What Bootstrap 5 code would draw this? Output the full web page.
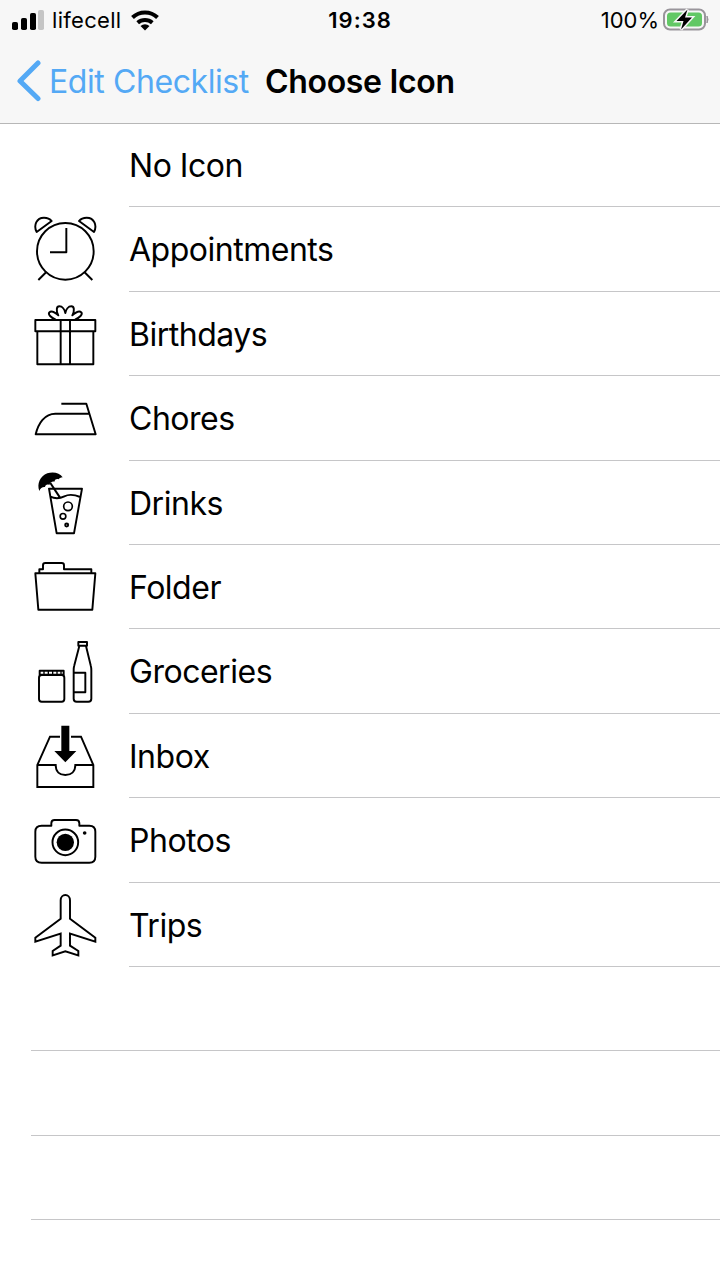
<!DOCTYPE html>
<html lang="en">
<head>
<meta charset="utf-8">
<meta name="viewport" content="width=device-width, initial-scale=1">
<title>Choose Icon</title>
<link href="https://cdn.jsdelivr.net/npm/bootstrap@5.3.0/dist/css/bootstrap.min.css" rel="stylesheet">
<style>
body { font-family: Inter, "Liberation Sans", sans-serif; color: #000; background: #fff; overflow: hidden; }
.top-area { height: 124px; background: #f7f7f7; border-bottom: 1px solid #b7b7b7; }
.status { height: 40px; font-size: 22px; line-height: 40px; }
.status > * { flex: 1 1 0; }
.bars { margin-left: 12px; }
.carrier { letter-spacing: .3px; margin-left: 8px; }
.wifi { margin-left: 9px; }
.clock { font-weight: 600; letter-spacing: 1px; }
.battery { margin: 0 11px 0 4px; }
.title-bar { height: 83px; font-size: 32px; line-height: 83px; white-space: nowrap; }
.back { color: #54a9f5; text-decoration: none; width: 249px; letter-spacing: -.42px; }
.back svg { flex: none; margin: -1px 7px 0 16px; }
.screen-title { font-size: 32px; font-weight: 600; line-height: 83px; margin-left: 16px; letter-spacing: -.32px; }
.entry { height: 84.42px; padding-left: 32px; }
.entry svg { width: 66px; height: 84px; flex: none; fill: none; stroke: #000; stroke-width: 5.8; stroke-linejoin: round; }
.entry .solid { fill: #000; }
.entry .label { margin-left: 31px; font-size: 32px; letter-spacing: -.48px; border-bottom: 1px solid #c6c6c8; height: 100%; line-height: 86px; }
.entry.first { height: 83.4px; }
.entry.first .label { line-height: 84px; }
.blank { height: 84.42px; margin-left: 31px; border-bottom: 1px solid #c6c6c8; }
</style>
</head>
<body>
<header class="top-area">
  <div class="status d-flex align-items-center">
    <div class="d-flex align-items-center">
      <svg class="bars" width="32" height="22" viewBox="0 0 32 22"><rect y="13" width="6" height="8" rx="1.8"/><rect x="9" y="9" width="6" height="12" rx="1.8"/><rect x="18" y="4" width="6" height="17" rx="1.8"/><rect x="26" y="1" width="6" height="20" rx="1.8" fill="#c5c5c5"/></svg>
      <span class="carrier">lifecell</span>
      <svg class="wifi" width="31" height="22" viewBox="0 0 30 22"><g fill="none" stroke="#000" stroke-width="4"><path d="M2 8.500a18 18 0 0 1 25 0"/><path d="M7.2 13.700a11 11 0 0 1 14.600 0"/></g><path d="M14.500 21.500l-4.500-4.500a7 7 0 0 1 9 0z"/></svg>
    </div>
    <div class="clock text-center">19:38</div>
    <div class="d-flex align-items-center justify-content-end">
      <span>100%</span>
      <svg class="battery" width="46" height="24" viewBox="0 0 46 24"><rect x="1" y="1.500" width="41" height="20" rx="6" fill="#f7f7f7" stroke="#99959b" stroke-width="2"/><rect x="4" y="4.500" width="35" height="14" rx="3.500" fill="#62c865"/><path d="M44 8q2 3.500 0 7z" fill="#99959b" stroke="#99959b"/><path d="M24.500 1.500l-11 11.500h7l-2.500 8.500 11-12h-7z" stroke="#f7f7f7" stroke-width="3"/><path d="M24.500 1.500l-11 11.500h7l-2.500 8.500 11-12h-7z"/></svg>
    </div>
  </div>
  <nav class="title-bar d-flex">
    <a class="back d-flex align-items-center" href="#">
      <svg width="26" height="42" viewBox="0 0 26 42" fill="none" stroke="#54a9f5" stroke-width="5" stroke-linecap="round" stroke-linejoin="round"><path d="M22 3L4 21l18 17.500"/></svg><span>Edit Checklist</span>
    </a>
    <h1 class="screen-title mb-0">Choose Icon</h1>
  </nav>
</header>
<main>
  <div class="entry first d-flex"><svg></svg><div class="label flex-grow-1">No Icon</div></div>
  <div class="entry d-flex">
    <svg viewBox="21 6 198 252"><circle cx="121" cy="139" r="85"/><path d="M124 69v73H75M64 201l-24 24M178 201l24 24M35 81C25 62 34 38 57 38q15 0 23 10zM207 81C217 62 208 38 185 38q-15 0-23 10z"/></svg>
    <div class="label flex-grow-1">Appointments</div></div>
  <div class="entry d-flex">
    <svg viewBox="21 -11 198 252"><path d="M31 73H211V107H31zM37 107V206H205V107M107 73V206M135 73V206M92 72C78 66 68 56 73 50c6-6 17 0 27 9C92 43 95 32 103 32c9 0 16 10 18 20 2-10 9-20 18-20 8 0 11 11 3 27 10-9 21-15 27-9 5 6-5 16-19 22"/></svg>
    <div class="label flex-grow-1">Birthdays</div></div>
  <div class="entry d-flex">
    <svg viewBox="21 -12 198 252"><path d="M109 71H184L212 163H32C40 130 59 101 91 101H192"/></svg>
    <div class="label flex-grow-1">Chores</div></div>
  <div class="entry d-flex">
    <svg viewBox="21 -14 198 252"><path d="M72 69H171L147 203H95zM76 93c15 7 30 5 42-1s28-6 48 2"/><path d="M76 52L105 96" stroke-width="6"/><circle cx="129" cy="122" r="13" stroke-width="5"/><circle cx="114" cy="152" r="8.500" stroke-width="5"/><circle cx="125" cy="178" r="4.500"/><path class="solid" stroke="none" d="M43 76C35 55 45 31 67 23c18-6 38-1 46 12-7 1-10 2-12 6-5-2-11-1-13 7-6-2-13 2-15 10-7-3-12 0-13 6-7-1-14 3-17 12z"/></svg>
    <div class="label flex-grow-1">Drinks</div></div>
  <div class="entry d-flex">
    <svg viewBox="21 -16 198 252"><path d="M31 69H211L202 178H40zM43 68V57H54V45q0-7 7-7H110q7 0 7 7V57H199V68"/></svg>
    <div class="label flex-grow-1">Folder</div></div>
  <div class="entry d-flex">
    <svg viewBox="21 -12 198 252"><rect x="42" y="126" width="76" height="80" rx="8"/><path d="M44 113H116V125H44z"/><path d="M57 112v13M70 112v13M83 112v13M96 112v13M108 112v13" stroke-width="4"/><path d="M160 27h26v11h-26zM163 39L148 97q-2 7-2 15V197q0 9 9 9H190q9 0 9-9V112q0-8-2-15L183 39M146 119H181V178H146"/></svg>
    <div class="label flex-grow-1">Groceries</div></div>
  <div class="entry d-flex">
    <svg viewBox="21 -14 198 252" style="stroke-linejoin:miter"><path d="M105 54H75L37 139V205H205V139L168 54H138M37 139H92C92 159 104 169 121 169S151 159 151 139H205"/><path class="solid" stroke="none" d="M109 21h24V97h21L121 131 88 97h21z"/></svg>
    <div class="label flex-grow-1">Inbox</div></div>
  <div class="entry d-flex">
    <svg viewBox="21 -21 198 252"><path d="M50 62H79V55q0-10 10-10H153q10 0 10 10V62H193q18 0 18 18V155q0 18-18 18H50q-19 0-19-18V80q0-18 19-18z"/><circle cx="121" cy="112" r="38.500"/><circle class="solid" cx="121" cy="112" r="26" stroke="none"/><circle class="solid" cx="179" cy="84" r="5.500" stroke="none"/></svg>
    <div class="label flex-grow-1">Photos</div></div>
  <div class="entry d-flex">
    <svg viewBox="21 -17 198 252" style="stroke-linejoin:miter"><path d="M107 90V35C107 14 135 14 135 35V90L211 147V159L135 135V171L160 187V200L121 188 83 200V187L107 171V135L31 159V147z"/></svg>
    <div class="label flex-grow-1">Trips</div></div>
  <div class="blank"></div>
  <div class="blank"></div>
  <div class="blank"></div>
</main>
<script src="https://cdn.jsdelivr.net/npm/bootstrap@5.3.0/dist/js/bootstrap.bundle.min.js"></script>
</body>
</html>
